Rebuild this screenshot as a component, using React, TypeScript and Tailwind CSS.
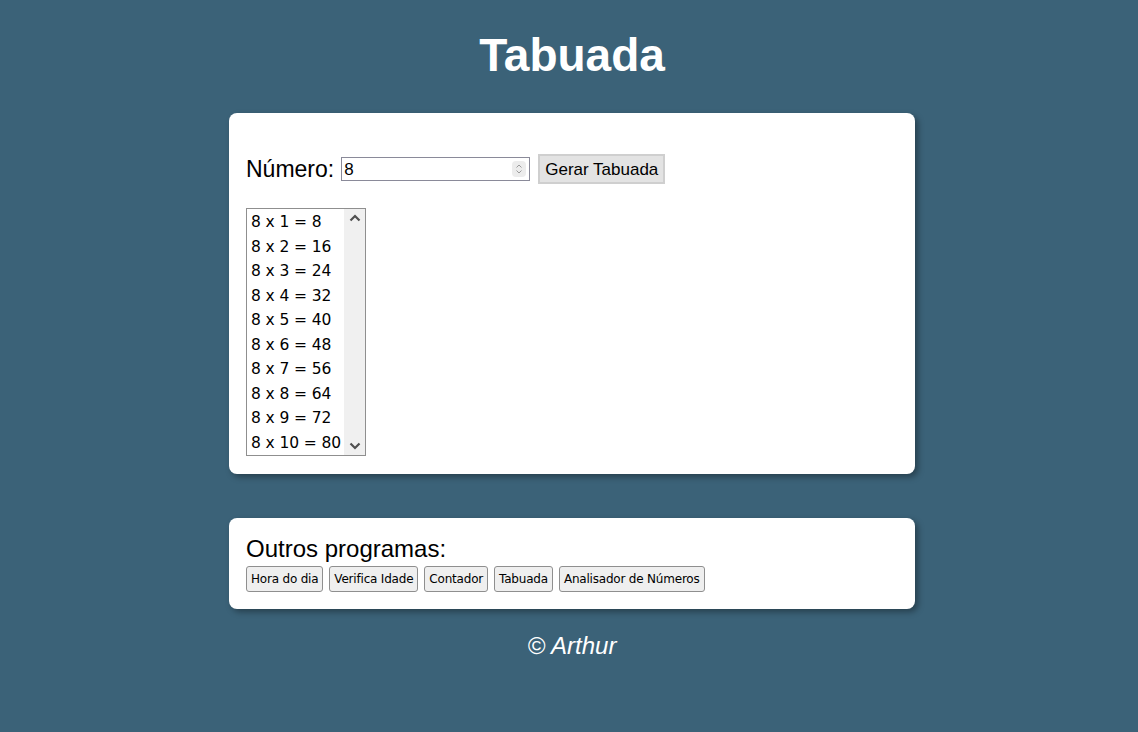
import React from 'react'

const linhas = Array.from({ length: 10 }, (_, i) => `8 x ${i + 1} = ${8 * (i + 1)}`)
const programas = ['Hora do dia', 'Verifica Idade', 'Contador', 'Tabuada', 'Analisador de Números']

export default function App() {
    return (
        <div className="min-h-screen bg-[#3b6278] pl-[6px] pt-[30px] font-['Liberation_Sans',Arial,sans-serif]">
            <h1 className="text-center text-[46px] font-bold leading-[50px] text-white">Tabuada</h1>

            <section className="mx-auto mt-[33px] w-[686px] rounded-lg bg-white px-[17px] pb-[18px] pt-[41px] shadow-[3px_3px_6px_rgba(0,0,0,.35)]">
                <div className="flex items-center">
                    <span className="text-[23px] leading-[30px] text-black">Número:</span>
                    <div className="ml-[7px] flex h-[24px] w-[189px] items-center border border-[#8a8a99] pl-[2px] pr-[3px]">
                        <span className="flex-1 text-[17px] leading-none text-black">8</span>
                        <span className="flex h-[16px] w-[14px] flex-col items-center justify-center rounded-sm bg-[#ececec]">
                            <svg width="8" height="12" viewBox="0 0 8 12" fill="none" stroke="#9a9a9a" strokeWidth="1">
                                <path d="M1.5 4.5 L4 2 L6.5 4.5" />
                                <path d="M1.5 7.5 L4 10 L6.5 7.5" />
                            </svg>
                        </span>
                    </div>
                    <button className="ml-[8px] h-[30px] border-2 border-[#cfcfcf] bg-[#e3e3e3] px-[5px] text-[17px] leading-none text-black">
                        Gerar Tabuada
                    </button>
                </div>

                <div className="mt-[24px] flex h-[248px] w-[120px] border border-[#8f8f8f] font-['DejaVu_Sans',Tahoma,sans-serif]">
                    <ul className="flex-1 pl-[4px] pt-[1px]">
                        {linhas.map((linha) => (
                            <li key={linha} className="h-[24.5px] whitespace-nowrap text-[15.5px] leading-[24.5px] tracking-[-0.1px] text-black">
                                {linha}
                            </li>
                        ))}
                    </ul>
                    <div className="flex w-[21px] flex-col items-center justify-between bg-[#f0f0f0] py-[5px]">
                        <svg width="12" height="8" viewBox="0 0 12 8" fill="none" stroke="#505050" strokeWidth="2.2">
                            <path d="M1.5 6.5 L6 2 L10.5 6.5" />
                        </svg>
                        <svg width="12" height="8" viewBox="0 0 12 8" fill="none" stroke="#505050" strokeWidth="2.2">
                            <path d="M1.5 1.5 L6 6 L10.5 1.5" />
                        </svg>
                    </div>
                </div>
            </section>

            <section className="mx-auto mt-[44px] w-[686px] rounded-lg bg-white px-[17px] pb-[17px] pt-[17px] shadow-[3px_3px_6px_rgba(0,0,0,.35)]">
                <p className="text-[24px] leading-[28px] text-black">Outros programas:</p>
                <div className="mt-[3px] flex gap-[6px]">
                    {programas.map((p) => (
                        <button
                            key={p}
                            className="h-[26px] rounded-[3px] border border-[#8f8f8f] bg-[#efefef] px-[4px] font-['DejaVu_Sans',Tahoma,sans-serif] text-[12px] tracking-[-0.2px] text-black"
                        >
                            {p}
                        </button>
                    ))}
                </div>
            </section>

            <p className="mt-[22px] text-center text-[24px] italic leading-[30px] text-white">© Arthur</p>
        </div>
    )
}
